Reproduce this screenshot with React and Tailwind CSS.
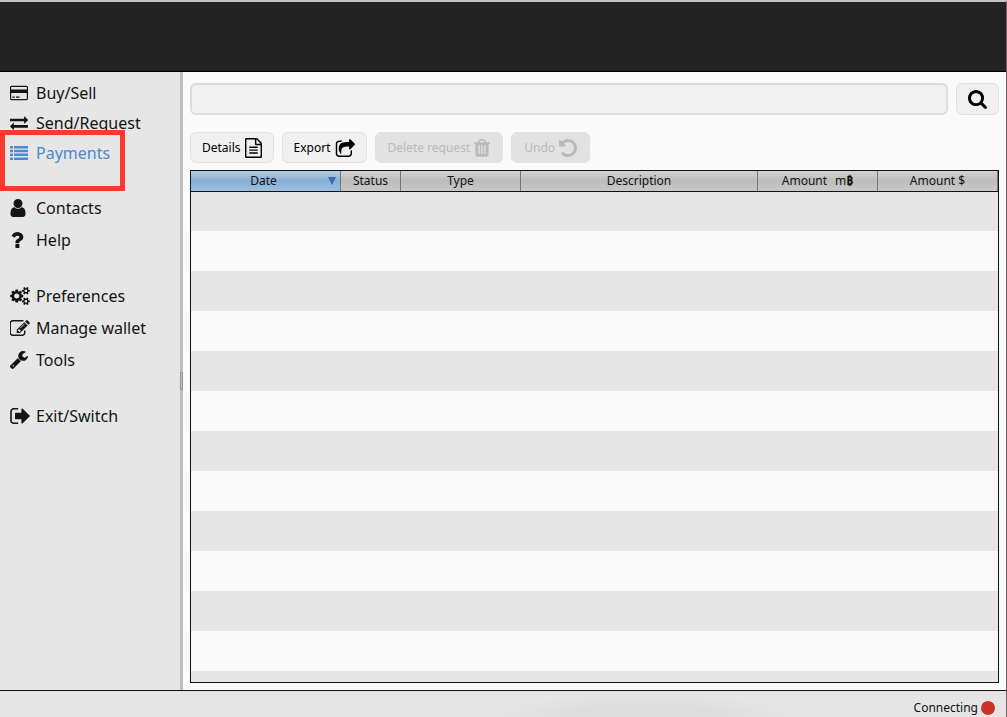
import React, { useState } from "react";

// [viewBox, path] for each icon
const icons = {
  card: [
    "0 128 1920 1536",
    "M1760 128q66 0 113 47t47 113v1216q0 66-47 113t-113 47h-1600q-66 0-113-47t-47-113v-1216q0-66 47-113t113-47h1600zm-1600 128q-13 0-22.5 9.5t-9.5 22.5v224h1664v-224q0-13-9.5-22.5t-22.5-9.5h-1600zm1600 1280q13 0 22.5-9.5t9.5-22.5v-608h-1664v608q0 13 9.5 22.5t22.5 9.5h1600zm-1504-128v-128h256v128h-256zm384 0v-128h384v128h-384z",
  ],
  exchange: [
    "0 256 1792 1376",
    "M1792 1184v192q0 13-9.5 22.5t-22.5 9.5h-1376v192q0 13-9.5 22.5t-22.5 9.5q-12 0-24-10l-319-320q-9-9-9-22 0-14 9-23l320-320q9-9 23-9 13 0 22.5 9.5t9.5 22.5v192h1376q13 0 22.5 9.5t9.5 22.5zm0-544q0 14-9 23l-320 320q-9 9-23 9-13 0-22.5-9.5t-9.5-22.5v-192h-1376q-13 0-22.5-9.5t-9.5-22.5v-192q0-13 9.5-22.5t22.5-9.5h1376v-192q0-14 9-23t23-9q12 0 24 10l319 319q9 9 9 23z",
  ],
  list: [
    "0 0 18 14",
    "M0 0h3v2.5h-3zM4 0h14v2.5h-14zM0 3.8h3v2.5h-3zM4 3.8h14v2.5h-14zM0 7.6h3v2.5h-3zM4 7.6h14v2.5h-14zM0 11.4h3v2.5h-3zM4 11.4h14v2.5h-14z",
  ],
  user: [
    "256 128 1280 1536",
    "M1536 1399q0 109-62.5 187t-150.5 78h-854q-88 0-150.5-78t-62.5-187q0-85 8.5-160.5t31.5-152 58.5-131 94-89 134.5-34.5q131 128 313 128t313-128q76 0 134.5 34.5t94 89 58.5 131 31.5 152 8.5 160.5zm-256-887q0 159-112.5 271.5t-271.5 112.5-271.5-112.5-112.5-271.5 112.5-271.5 271.5-112.5 271.5 112.5 112.5 271.5z",
  ],
  question: [
    "384 256 1024 1280",
    "M1088 1256v240q0 16-12 28t-28 12h-240q-16 0-28-12t-12-28v-240q0-16 12-28t28-12h240q16 0 28 12t12 28zm316-600q0 54-15.5 101t-35 76.5-55 59.5-57.5 43.5-61 35.5q-41 23-68.5 65t-27.5 67q0 17-12 32.5t-28 15.5h-240q-15 0-25.5-18.5t-10.5-37.5v-45q0-83 65-156.5t143-108.5q59-27 84-56t25-76q0-42-46.5-74t-107.5-32q-65 0-108 29-35 25-107 115-13 16-31 16-12 0-25-8l-164-125q-13-10-15.5-25t5.5-28q160-266 464-266 80 0 161 31t146 83 106 127.5 41 158.5z",
  ],
  cogs: [
    "0 16 1920 1760",
    "M896 896q0-106-75-181t-181-75-181 75-75 181 75 181 181 75 181-75 75-181zm768 512q0-52-38-90t-90-38-90 38-38 90q0 53 37.5 90.5t90.5 37.5 90.5-37.5 37.5-90.5zm0-1024q0-52-38-90t-90-38-90 38-38 90q0 53 37.5 90.5t90.5 37.5 90.5-37.5 37.5-90.5zm-384 421v185q0 10-7 19.5t-16 10.5l-155 24q-11 35-32 76 34 48 90 115 7 11 7 20 0 12-7 19-23 30-82.5 89.5t-78.5 59.5q-11 0-21-7l-115-90q-37 19-77 31-11 108-23 155-7 24-30 24h-186q-11 0-20-7.5t-10-17.5l-23-153q-34-10-75-31l-118 89q-7 7-20 7-11 0-21-8-144-133-144-160 0-9 7-19 10-14 41-53t47-61q-23-44-35-82l-152-24q-10-1-17-9.5t-7-19.5v-185q0-10 7-19.5t16-10.5l155-24q11-35 32-76-34-48-90-115-7-11-7-20 0-12 7-20 22-30 82-89t79-59q11 0 21 7l115 90q34-18 77-32 11-108 23-154 7-24 30-24h186q11 0 20 7.5t10 17.5l23 153q34 10 75 31l118-89q8-7 20-7 11 0 21 8 144 133 144 160 0 8-7 19-12 16-42 54t-45 60q23 48 34 82l152 23q10 2 17 10.5t7 19.5zm640 533v140q0 16-149 31-12 27-30 52 51 113 51 138 0 4-4 7-122 71-124 71-8 0-46-47t-52-68q-20 2-30 2t-30-2q-14 21-52 68t-46 47q-2 0-124-71-4-3-4-7 0-25 51-138-18-25-30-52-149-15-149-31v-140q0-16 149-31 13-29 30-52-51-113-51-138 0-4 4-7 4-2 35-20t59-34 30-16q8 0 46 46.5t52 67.5q20-2 30-2t30 2q51-71 92-112l6-2q4 0 124 70 4 3 4 7 0 25-51 138 17 23 30 52 149 15 149 31zm0-1024v140q0 16-149 31-12 27-30 52 51 113 51 138 0 4-4 7-122 71-124 71-8 0-46-47t-52-68q-20 2-30 2t-30-2q-14 21-52 68t-46 47q-2 0-124-71-4-3-4-7 0-25 51-138-18-25-30-52-149-15-149-31v-140q0-16 149-31 13-29 30-52-51-113-51-138 0-4 4-7 4-2 35-20t59-34 30-16q8 0 46 46.5t52 67.5q20-2 30-2t30 2q51-71 92-112l6-2q4 0 124 70 4 3 4 7 0 25-51 138 17 23 30 52 149 15 149 31z",
  ],
  edit: [
    "64 128 1728 1408",
    "M888 1184l116-116-152-152-116 116v56h96v96h56zm440-720q-16-16-33 1l-350 350q-17 17-1 33t33-1l350-350q17-17 1-33zm80 594v190q0 119-84.5 203.5t-203.5 84.5h-832q-119 0-203.5-84.5t-84.5-203.5v-832q0-119 84.5-203.5t203.5-84.5h832q63 0 117 25 15 7 18 23 3 17-9 29l-49 49q-14 14-32 8-23-6-45-6h-832q-66 0-113 47t-47 113v832q0 66 47 113t113 47h832q66 0 113-47t47-113v-126q0-13 9-22l64-64q15-15 35-7t20 29zm-96-738l288 288-672 672h-288v-288zm444 132l-92 92-288-288 92-92q28-28 68-28t68 28l152 152q28 28 28 68t-28 68z",
  ],
  wrench: [
    "85 128 1641 1643",
    "M448 1472q0-26-19-45t-45-19-45 19-19 45 19 45 45 19 45-19 19-45zm644-420l-682 682q-37 37-90 37-52 0-91-37l-106-108q-38-36-38-90 0-53 38-91l681-681q39 98 114.5 173.5t173.5 114.5zm634-435q0 39-23 106-47 134-164.5 217.5t-258.5 83.5q-185 0-316.5-131.5t-131.5-316.5 131.5-316.5 316.5-131.5q58 0 121.5 16.5t107.5 46.5q16 11 16 28t-16 28l-293 169v224l193 107q5-3 79-48.5t135.5-81 70.5-35.5q15 0 23.5 10t8.5 25z",
  ],
  signOut: [
    "64 256 1568 1280",
    "M704 1440q0 4 1 20t.5 26.5-3 23.5-10 19.5-20.5 6.5h-320q-119 0-203.5-84.5t-84.5-203.5v-704q0-119 84.5-203.5t203.5-84.5h320q13 0 22.5 9.5t9.5 22.5q0 4 1 20t.5 26.5-3 23.5-10 19.5-20.5 6.5h-320q-66 0-113 47t-47 113v704q0 66 47 113t113 47h312l11.5 1 11.5 3 8 5.5 7 9 2 13.5zm928-544q0 26-19 45l-544 544q-19 19-45 19t-45-19-19-45v-288h-448q-26 0-45-19t-19-45v-384q0-26 19-45t45-19h448v-288q0-26 19-45t45-19 45 19l544 544q19 19 19 45z",
  ],
  file: [
    "128 0 1536 1792",
    "M1596 380q28 28 48 76t20 88v1152q0 40-28 68t-68 28h-1344q-40 0-68-28t-28-68v-1600q0-40 28-68t68-28h896q40 0 88 20t76 48zm-444-244v376h376q-10-29-22-41l-313-313q-12-12-41-22zm384 1528v-1024h-416q-40 0-68-28t-28-68v-416h-768v1536h1280zm-1024-864q0-14 9-23t23-9h704q14 0 23 9t9 23v64q0 14-9 23t-23 9h-704q-14 0-23-9t-9-23v-64zm736 224q14 0 23 9t9 23v64q0 14-9 23t-23 9h-704q-14 0-23-9t-9-23v-64q0-14 9-23t23-9h704zm0 256q14 0 23 9t9 23v64q0 14-9 23t-23 9h-704q-14 0-23-9t-9-23v-64q0-14 9-23t23-9h704z",
  ],
  share: [
    "0 0 1728 1536",
    "M1472 989v259q0 119-84.5 203.5t-203.5 84.5h-832q-119 0-203.5-84.5t-84.5-203.5v-832q0-119 84.5-203.5t203.5-84.5h255q13 0 22.5 9.5t9.5 22.5q0 27-26 32-77 26-133 60-10 4-16 4h-112q-66 0-113 47t-47 113v832q0 66 47 113t113 47h832q66 0 113-47t47-113v-214q0-19 18-29 28-13 54-37 16-16 35-8 21 9 21 31zm237-496l-384 384q-18 19-45 19-12 0-25-5-39-17-39-59v-192h-160q-323 0-438 131-119 137-74 473 3 23-20 34-8 2-12 2-16 0-26-13-10-14-21-31t-39.5-68.5-49.5-99.5-38.5-114-17.5-122q0-49 3.5-91t14-90 28-88 47-81.5 68.5-74 94.5-61.5 124.5-48.5 159.5-30.5 196.5-11h160v-192q0-42 39-59 13-5 25-5 26 0 45 19l384 384q19 19 19 45t-19 45z",
  ],
  trash: [
    "192 128 1408 1536",
    "M704 1376v-704q0-14-9-23t-23-9h-64q-14 0-23 9t-9 23v704q0 14 9 23t23 9h64q14 0 23-9t9-23zm256 0v-704q0-14-9-23t-23-9h-64q-14 0-23 9t-9 23v704q0 14 9 23t23 9h64q14 0 23-9t9-23zm256 0v-704q0-14-9-23t-23-9h-64q-14 0-23 9t-9 23v704q0 14 9 23t23 9h64q14 0 23-9t9-23zm-544-992h448l-48-117q-7-9-17-11h-317q-10 2-17 11zm928 32v64q0 14-9 23t-23 9h-96v948q0 83-47 143.5t-113 60.5h-832q-66 0-113-58.5t-47-141.5v-952h-96q-14 0-23-9t-9-23v-64q0-14 9-23t23-9h309l70-167q15-37 54-63t79-26h320q40 0 79 26t54 63l70 167h309q14 0 23 9t9 23z",
  ],
  undo: [
    "128 128 1536 1536",
    "M1664 896q0 156-61 298t-164 245-245 164-298 61q-172 0-327-72.5t-264-204.5q-7-10-6.5-22.5t8.5-20.5l137-138q10-9 25-9 16 2 23 12 73 95 179 147t225 52q104 0 198.5-40.5t163.5-109.5 109.5-163.5 40.5-198.5-40.5-198.5-109.5-163.5-163.5-109.5-198.5-40.5q-98 0-188 35.5t-160 101.5l137 138q31 30 14 69-17 40-59 40h-448q-26 0-45-19t-19-45v-448q0-42 40-59 39-17 69 14l130 129q107-101 244.5-156.5t284.5-55.5q156 0 298 61t245 164 164 245 61 298z",
  ],
  search: [
    "64 128 1664 1664",
    "M1216 832q0-185-131.5-316.5t-316.5-131.5-316.5 131.5-131.5 316.5 131.5 316.5 316.5 131.5 316.5-131.5 131.5-316.5zm512 832q0 52-38 90t-90 38q-54 0-90-38l-343-342q-179 124-399 124-143 0-273.5-55.5t-225-150-150-225-55.5-273.5 55.5-273.5 150-225 225-150 273.5-55.5 273.5 55.5 225 150 150 225 55.5 273.5q0 220-124 399l343 343q37 37 37 90z",
  ],
};

const Icon = ({ name, className }) => {
  const [viewBox, path] = icons[name];
  return (
    <svg
      viewBox={viewBox}
      fill="currentColor"
      aria-hidden="true"
      className={`shrink-0 ${className}`}
    >
      <path d={path} />
    </svg>
  );
};

const navGroups = [
  {
    className: "leading-[30px]",
    items: [
      { label: "Buy/Sell", icon: "card", size: "w-[18px] h-4" },
      { label: "Send/Request", icon: "exchange", size: "w-[18px] h-[14px]" },
      { label: "Payments", icon: "list", size: "w-[18px] h-[14px]" },
    ],
  },
  {
    className: "leading-8",
    items: [
      { label: "Contacts", icon: "user", size: "w-4 h-[18px]" },
      { label: "Help", icon: "question", size: "w-[14px] h-4" },
    ],
  },
  {
    className: "leading-8",
    items: [
      { label: "Preferences", icon: "cogs", size: "w-5 h-[18px]" },
      { label: "Manage wallet", icon: "edit", size: "w-5 h-4" },
      { label: "Tools", icon: "wrench", size: "w-[18px] h-[18px]" },
    ],
  },
  {
    className: "leading-8",
    items: [{ label: "Exit/Switch", icon: "signOut", size: "w-5 h-4" }],
  },
];

const actions = [
  { label: "Details", icon: "file", size: "w-[17px] h-5" },
  { label: "Export", icon: "share", size: "w-5 h-[18px]" },
  { label: "Delete request", icon: "trash", size: "w-4 h-[18px]", disabled: true },
  { label: "Undo", icon: "undo", size: "w-[18px] h-[18px]", disabled: true },
];

const columns = [
  { label: "Date", width: "w-[150px]" },
  { label: "Status", width: "w-[60px]" },
  { label: "Type", width: "w-[120px]" },
  { label: "Description", width: "" },
  { label: "Amount", width: "w-[120px]", bitcoin: true },
  { label: "Amount $", width: "w-[120px]" },
];

const rows = Array.from({ length: 13 });

const Sidebar = ({ active, onSelect }) => (
  <nav className="flex flex-col gap-6 w-[180px] shrink-0 pt-1.5 bg-[#e6e6e6] text-base">
    {navGroups.map((group, i) => (
      <ul key={i} className={group.className}>
        {group.items.map((item) => (
          <li key={item.label} className="relative">
            <a
              href="#"
              onClick={() => onSelect(item.label)}
              className={`flex items-center pl-2.5 ${
                active === item.label ? "text-[#4a8ad0]" : "text-[#141414]"
              }`}
            >
              <span className="flex w-[26px] shrink-0">
                <Icon name={item.icon} className={item.size} />
              </span>
              {item.label}
            </a>
            {active === item.label && (
              <span className="absolute left-0 -top-2 w-[125px] h-[61px] border-5 border-[#f93a2f] pointer-events-none" />
            )}
          </li>
        ))}
      </ul>
    ))}
  </nav>
);

const PaymentsTable = () => (
  <div className="flex-1 min-h-0 overflow-hidden border border-[#111]">
    <table className="w-full table-fixed border-separate border-spacing-0 text-xs">
      <thead>
        <tr className="h-5">
          {columns.map((col, i) => (
            <th
              key={col.label}
              scope="col"
              className={`relative p-0 font-normal leading-5 border-r border-[#777] ${col.width} ${
                i === 0
                  ? "bg-linear-to-b from-[#b5d0e6] via-[#88aed3] to-[#9bc0e2] pr-1"
                  : "bg-linear-to-b from-[#d2d2d2] via-[#bcbcbc] to-[#c9c9c9]"
              }`}
            >
              {col.label}
              {col.bitcoin && (
                <>
                  <span className="ml-2">m</span>
                  <b>₿</b>
                </>
              )}
              {i === 0 && (
                <svg
                  viewBox="0 0 8 8"
                  className="absolute right-1 top-1.5 size-2 fill-[#3b6ba8]"
                  aria-hidden="true"
                >
                  <path d="M0 0h8L4 8z" />
                </svg>
              )}
            </th>
          ))}
        </tr>
      </thead>
      <tbody>
        {rows.map((_, i) => (
          <tr key={i} className="h-10 odd:bg-[#e6e6e6] even:bg-[#fafafa]">
            <td
              colSpan={columns.length}
              className={`p-0 ${i === 0 ? "border-t border-[#111]" : ""}`}
            />
          </tr>
        ))}
      </tbody>
    </table>
  </div>
);

const App = () => {
  const [active, setActive] = useState("Payments");
  const [query, setQuery] = useState("");

  return (
    <div className="flex flex-col h-screen border-t-2 border-r border-t-[#c4c4c4] border-r-[#75616c] bg-[#fafafa] text-[#111] font-['Noto_Sans',sans-serif]">
      <header className="h-[70px] shrink-0 bg-[#232323] border-b border-black" />

      <div className="flex flex-1 min-h-0">
        <Sidebar active={active} onSelect={setActive} />
        <div className="flex items-center w-[3px] shrink-0 bg-[#bebebe]">
          <span className="w-full h-[18px] border border-[#999]" />
        </div>

        <main className="flex flex-col flex-1 min-w-0 pl-[7px] pr-[7px] pt-[11px] pb-[7px]">
          <form
            className="flex gap-2 mb-[17px]"
            onSubmit={(e) => e.preventDefault()}
          >
            <input
              type="text"
              aria-label="Search payments"
              value={query}
              onChange={(e) => setQuery(e.target.value)}
              className="flex-1 min-w-0 h-8 px-2 rounded-md border-2 border-[#dcdcdc] bg-[#f1f1f1] text-xs outline-none"
            />
            <button
              type="submit"
              aria-label="Search"
              className="flex items-center justify-center w-[43px] h-8 rounded-md border border-[#e2e2e2] bg-[#f0f0f0] text-black"
            >
              <Icon name="search" className="size-[19px]" />
            </button>
          </form>

          <div className="flex gap-2 mb-[7px]">
            {actions.map((action) => (
              <button
                key={action.label}
                type="button"
                disabled={action.disabled}
                className="flex items-center gap-1 h-[31px] px-[11px] rounded-md border border-[#e2e2e2] bg-[#f0f0f0] text-xs text-black disabled:px-3 disabled:bg-[#e2e2e2] disabled:text-[#bababa]"
              >
                {action.label}
                <Icon name={action.icon} className={action.size} />
              </button>
            ))}
          </div>

          <PaymentsTable />
        </main>
      </div>

      <footer className="flex items-center justify-end gap-[3px] h-[27px] shrink-0 pt-2 pr-[11px] border-t border-[#111] bg-[#e5e5e5] bg-[radial-gradient(ellipse_150px_24px_at_64%_100%,#dedede_50%,#e5e5e5)] text-xs">
        Connecting
        <span className="size-[14px] rounded-full bg-[#cb3227]" />
      </footer>
    </div>
  );
};

export default App;
